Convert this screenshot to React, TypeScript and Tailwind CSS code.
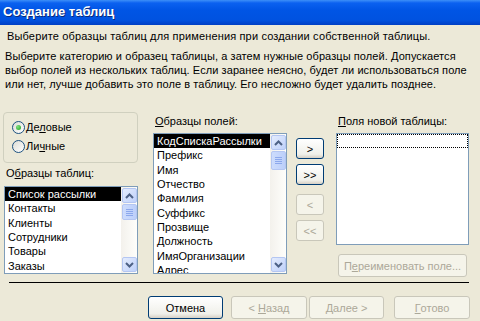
import type { ReactNode } from "react"

const font = "font-['Liberation_Sans',Arial,sans-serif]"

function U({ children }: { children: ReactNode }) {
  return <span className="underline underline-offset-[1px]">{children}</span>
}

function Chevron({ down }: { down?: boolean }) {
  return (
    <svg width="9" height="6" viewBox="0 0 9 6" className={down ? "rotate-180" : ""}>
      <path d="M1 5 L4.5 1.5 L8 5" fill="none" stroke="#4d6185" strokeWidth="2" />
    </svg>
  )
}

function ScrollBtn({ down }: { down?: boolean }) {
  return (
    <div className="flex h-[15px] w-[15px] items-center justify-center rounded-[2px] border border-[#b4c6f2] bg-[linear-gradient(135deg,#e4ecfd,#bfd1fa)]">
      <Chevron down={down} />
    </div>
  )
}

function Scrollbar({ thumb }: { thumb: number }) {
  return (
    <div className="flex w-[16px] flex-col items-center bg-[linear-gradient(to_right,#f3f1ec,#fefefb)] pt-[1px] pb-[1px]">
      <ScrollBtn />
      <div
        className="mt-[1px] flex w-[15px] flex-col items-center justify-center gap-[1px] rounded-[2px] border border-[#b4c6f2] bg-[linear-gradient(to_right,#cddcfc,#bccffa)]"
        style={{ height: thumb }}
      >
        <div className="h-px w-[7px] bg-[#8ca8ec]" />
        <div className="h-px w-[7px] bg-[#8ca8ec]" />
        <div className="h-px w-[7px] bg-[#8ca8ec]" />
        <div className="h-px w-[7px] bg-[#8ca8ec]" />
      </div>
      <div className="flex-1" />
      <ScrollBtn down />
    </div>
  )
}

function ListBox({ items, width, height, thumb, pad }: { items: string[]; width: string; height: string; thumb: number; pad: string }) {
  return (
    <div className={`flex overflow-hidden border border-[#7f9db9] bg-white ${width} ${height}`}>
      <div className="flex-1 overflow-hidden">
        {items.map((item, i) => (
          <div
            key={item}
            className={`flex h-[14.3px] items-center whitespace-nowrap ${pad} ${i === 0 ? "bg-black text-white" : "text-black"}`}
          >
            {item}
          </div>
        ))}
      </div>
      <Scrollbar thumb={thumb} />
    </div>
  )
}

function Radio({ checked, children }: { checked?: boolean; children: ReactNode }) {
  return (
    <div className="flex h-[14px] items-center gap-[1px]">
      <div className="flex h-[13px] w-[13px] items-center justify-center rounded-full border border-[#1c5180] bg-[linear-gradient(135deg,#dcdcd5,#ffffff)]">
        {checked && <div className="h-[5px] w-[5px] rounded-full bg-[radial-gradient(circle_at_35%_35%,#7ee07e,#21a121)]" />}
      </div>
      <span>{children}</span>
    </div>
  )
}

function Btn({ children, disabled, className }: { children: ReactNode; disabled?: boolean; className: string }) {
  return (
    <div
      className={[
        "flex items-center justify-center whitespace-pre rounded-[3px] border",
        disabled
          ? "border-[#c9c7ba] bg-[#f5f4ea] text-[#aca899]"
          : "border-[#003c74] bg-[linear-gradient(to_bottom,#ffffff,#f0f0ea_80%,#d6d0c5)] text-black",
        className,
      ].join(" ")}
    >
      {children}
    </div>
  )
}

export default function App() {
  return (
    <div className={`flex h-[321px] w-[480px] flex-col overflow-hidden bg-[#ece9d8] text-[11px] leading-[14px] text-black ${font}`}>
      <div className="flex h-[25px] shrink-0 items-center bg-[linear-gradient(to_bottom,#3d8ff8_0%,#0b61f0_12%,#0055e5_40%,#0052e0_80%,#003fc4_100%)] pb-[1px] pl-[3px] text-[13px] font-bold text-white text-shadow-[1px_1px_0_#0a2a7a]">
        Создание таблиц
      </div>

      <div className="mt-[4px] pl-[7px] tracking-[0.15px]">Выберите образцы таблиц для применения при создании собственной таблицы.</div>
      <div className="mt-[6px] pl-[5px] pr-[6px] tracking-[0.08px]">
        Выберите категорию и образец таблицы, а затем нужные образцы полей. Допускается выбор полей из нескольких таблиц. Если заранее неясно, будет ли использоваться поле или нет, лучше добавить это поле в таблицу. Его несложно будет удалить позднее.
      </div>

      <div className="mt-[21px] flex h-[170px] shrink-0 items-start">
        <div className="ml-[3px] flex w-[135px] flex-col">
          <div className="flex h-[51px] flex-col gap-[5px] rounded-[4px] border border-[#d0d0bf] pt-[7px] pl-[8px]">
            <Radio checked>
              Де<U>л</U>овые
            </Radio>
            <Radio>
              Ли<U>ч</U>ные
            </Radio>
          </div>
          <div className="mt-[3px] pl-[3px]">
            О<U>б</U>разцы таблиц:
          </div>
          <div className="mt-[6px] ml-[1px]">
            <ListBox
              items={["Список рассылки", "Контакты", "Клиенты", "Сотрудники", "Товары", "Заказы"]}
              width="w-[134px]"
              height="h-[88px]"
              thumb={16}
              pad="pl-[3px]"
            />
          </div>
        </div>

        <div className="ml-[15px] flex flex-col pt-[2px]">
          <div className="pl-[2px]">
            <U>О</U>бразцы полей:
          </div>
          <div className="mt-[5px]">
            <ListBox
              items={[
                "КодСпискаРассылки",
                "Префикс",
                "Имя",
                "Отчество",
                "Фамилия",
                "Суффикс",
                "Прозвище",
                "Должность",
                "ИмяОрганизации",
                "Адрес",
              ]}
              width="w-[134px]"
              height="h-[141px]"
              thumb={19}
              pad="pl-[3px]"
            />
          </div>
        </div>

        <div className="ml-[9px] flex flex-col pt-[26px]">
          <Btn className="h-[21px] w-[28px]">&gt;</Btn>
          <Btn className="mt-[5px] h-[21px] w-[28px]">&gt;&gt;</Btn>
          <Btn disabled className="mt-[9px] h-[21px] w-[28px]">
            &lt;
          </Btn>
          <Btn disabled className="mt-[5px] h-[21px] w-[28px]">
            &lt;&lt;
          </Btn>
        </div>

        <div className="ml-[12px] flex flex-col pt-[2px]">
          <div className="pl-[2px]">
            <U>П</U>оля новой таблицы:
          </div>
          <div className="mt-[5px] h-[112px] w-[133px] border border-[#7f9db9] bg-white">
            <div className="h-[14px] border border-dotted border-black" />
          </div>
          <Btn disabled className="mt-[9px] ml-[2px] h-[23px] w-[129px]">
            П<U>е</U>реименовать поле...
          </Btn>
        </div>
      </div>

      <div className="ml-[9px] h-px w-[460px] shrink-0 bg-black" />

      <div className="mt-[13px] flex">
        <Btn className="ml-[148px] h-[23px] w-[75px]">Отмена</Btn>
        <Btn disabled className="ml-[8px] h-[23px] w-[76px]">
          {"< "}
          <U>Н</U>азад
        </Btn>
        <Btn disabled className="ml-[2px] h-[23px] w-[75px]">
          <U>Д</U>алее{" >"}
        </Btn>
        <Btn disabled className="ml-[10px] h-[23px] w-[76px]">
          <U>Г</U>отово
        </Btn>
      </div>
    </div>
  )
}
